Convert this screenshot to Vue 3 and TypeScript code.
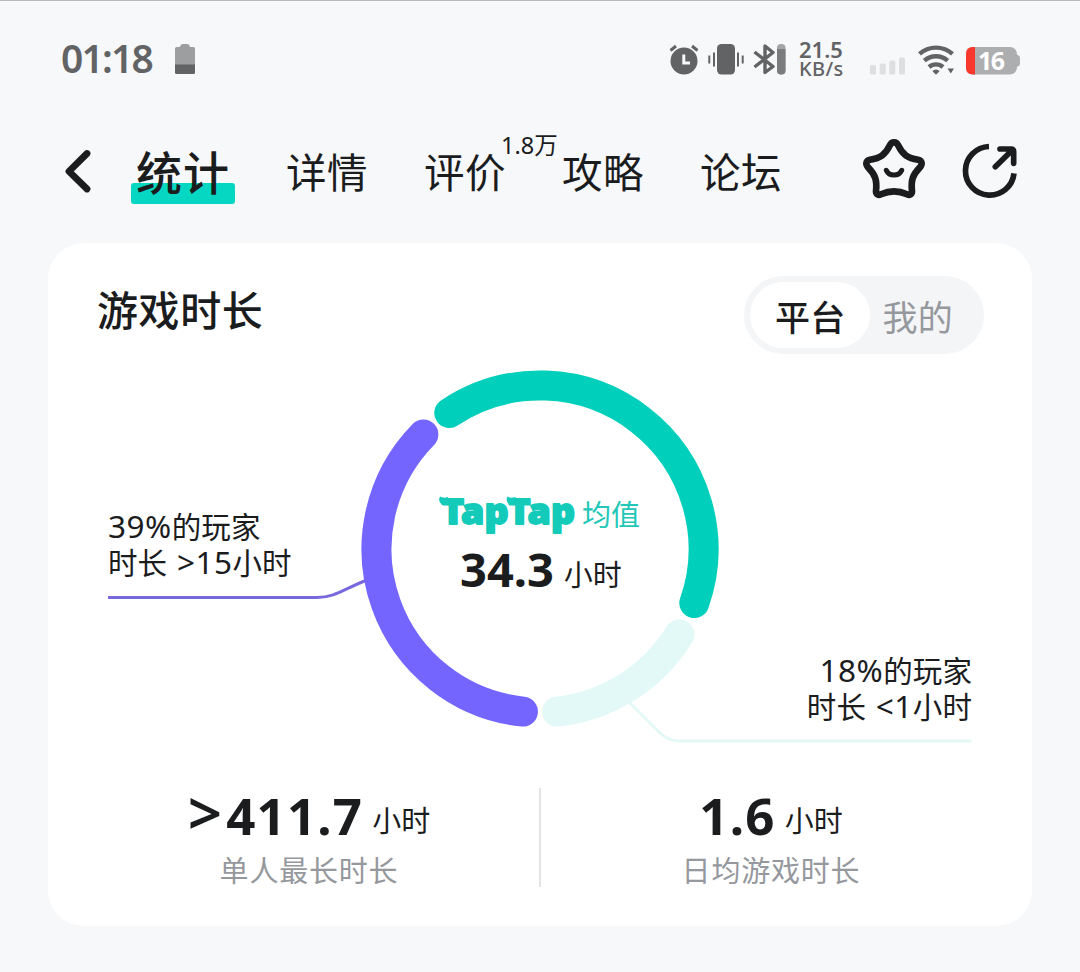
<template>
  <div class="page">
    <header class="status-bar">
      <span class="clock">01:18</span>
      <svg class="low-battery" width="20" height="30" viewBox="0 0 20 30">
        <path d="M0 4.5Q0 3 1.5 3H5Q5.500 0 8 0H12Q14.500 0 15 3H18.500Q20 3 20 4.500V21H0Z" fill="#9d9ea0" />
        <path d="M0 20.500H20V28.500Q20 30 18.500 30H1.500Q0 30 0 28.500Z" fill="#626365" />
      </svg>
      <div class="status-icons">
        <svg class="icon-alarm" width="32" height="34" viewBox="0 0 32 34" fill="none">
          <circle cx="16" cy="18" r="13.500" fill="#626365" />
          <path d="M2.500 7.500L8 3M24 3L29.500 7.500" stroke="#626365" stroke-width="3" />
          <path d="M15.800 11.500V20H22" stroke="#f7f8fa" stroke-width="3" />
        </svg>
        <svg class="icon-vibrate" width="36" height="34" viewBox="0 0 36 34">
          <rect x="9" y="1" width="18" height="30.500" rx="4.500" fill="#626365" />
          <path d="M1.300 12.500V20.500M6 9.500V23.500M30 9.500V23.500M34.700 12.500V20.500" stroke="#626365" stroke-width="2" />
        </svg>
        <svg class="icon-bluetooth" width="34" height="34" viewBox="0 0 34 34" fill="none">
          <path d="M1.500 9L20 23.500L12 29.500V3L20 9.500L1.500 24" stroke="#626365" stroke-width="3.400" stroke-linejoin="round" />
          <rect x="24" y="1" width="8.500" height="30.500" rx="4" fill="#a3a4a6" />
          <path d="M24 6H32.500V27.500Q32.500 31.500 28.250 31.500Q24 31.500 24 27.500Z" fill="#7b7c7e" />
        </svg>
        <div class="speed">
          <span class="speed-value">21.5</span>
          <span class="speed-unit">KB/s</span>
        </div>
        <svg class="icon-signal" width="36" height="34" viewBox="0 0 36 34" fill="#dedfe1">
          <rect x="0" y="22" width="6" height="9.500" rx="1.500" />
          <rect x="9.700" y="20.500" width="6" height="11" rx="1.500" />
          <rect x="19.300" y="17.500" width="6" height="14" rx="1.500" />
          <rect x="29" y="14.500" width="6" height="17" rx="1.500" />
        </svg>
        <svg class="icon-wifi" width="38" height="34" viewBox="0 0 38 34" fill="none">
          <g stroke="#626365" stroke-width="4.400">
            <path d="M1.500 10.800A25 25 0 0 1 34.500 10.800" />
            <path d="M6.300 17.600A18 18 0 0 1 29.700 17.600" />
            <path d="M11 24A10.500 10.500 0 0 1 25 24" />
          </g>
          <path d="M14.300 28Q18 25 21.700 28L18 31.800Z" fill="#626365" />
          <path d="M29.500 25.500H36L32.750 30.500Z" fill="#626365" />
        </svg>
        <svg class="icon-battery" width="54" height="34" viewBox="0 0 54 34">
          <path d="M50 11.500Q54 12 54 15V20.500Q54 23.500 50 24Z" fill="#adaeb0" />
          <rect x="0" y="4" width="51" height="27.500" rx="7" fill="#adaeb0" />
          <path d="M9 4V31.500H7Q0 31.500 0 24.500V11Q0 4 7 4Z" fill="#f8382c" />
          <text x="12" y="26.500" class="battery-text" textLength="27">16</text>
        </svg>
      </div>
    </header>

    <nav class="nav">
      <svg class="back" width="28" height="46" viewBox="0 0 28 46" fill="none">
        <path d="M23 5.500L5 23.300L23 41" stroke="#1b1c1e" stroke-width="6.800" stroke-linecap="round" stroke-linejoin="round" />
      </svg>
      <div class="tabs">
        <div
          v-for="tab in tabs"
          :key="tab.name"
          class="tab"
          :class="{ active: currentTab === tab.name }"
          @click="currentTab = tab.name"
        >
          <span class="tab-name">{{ tab.name }}</span>
          <span v-if="tab.count" class="tab-count">{{ tab.count }}</span>
        </div>
      </div>
      <svg class="star" width="64" height="62" viewBox="66 54 192 186" fill="none" stroke="#1b1c1e" stroke-linecap="round" stroke-linejoin="round">
        <path d="M149 77C155 64 169 64 175 77C188 104 203 114 234 119C247 122 248 133 239 143C219 164 212 180 216 214C216 223 209 227 201 223C175 211 149 211 123 223C115 227 108 223 108 214C112 180 105 164 85 143C76 133 77 122 90 119C121 114 136 104 149 77Z" stroke-width="20" />
        <path d="M139 151C148 170 176 170 185 151" stroke-width="15" />
      </svg>
      <svg class="share" width="60" height="58" viewBox="360 66 180 174" fill="none" stroke="#1b1c1e" stroke-width="17">
        <path d="M447 79.500A73 73 0 1 0 522 160" />
        <path d="M466 140L517 90M480 87H513Q521 87 521 95V130" stroke-linecap="round" />
      </svg>
    </nav>

    <section class="card">
      <div class="card-header">
        <h2 class="card-title">游戏时长</h2>
        <div class="switch">
          <span
            v-for="s in scopes"
            :key="s"
            class="switch-item"
            :class="{ on: scope === s }"
            @click="scope = s"
          >{{ s }}</span>
        </div>
      </div>

      <div class="chart">
        <svg class="ring" width="984" height="390" viewBox="0 0 984 390" fill="none">
          <path d="M60 231.500H269C287 231.500 296 223 320 213.500" stroke="#7768dc" stroke-width="3" />
          <path d="M580 335L611 366Q620 375 631 375H923.500" stroke="#e4f8f5" stroke-width="3" />
          <path
            v-for="arc in arcs"
            :key="arc.color"
            :d="arcPath(arc.from, arc.to)"
            :stroke="arc.color"
            stroke-width="30"
            stroke-linecap="round"
          />
        </svg>
        <div class="callout callout-left">
          <div><span class="num">39%</span>的玩家</div>
          <div>时长<span class="num sign"> &gt;</span><span class="num">15</span>小时</div>
        </div>
        <div class="average">
          <div class="brand">
            <svg class="brand-logo" width="140" height="46" viewBox="0 0 140 46">
              <text x="4" y="32" class="brand-text" textLength="133" lengthAdjust="spacingAndGlyphs">TapTap</text>
              <path d="M4 13Q-0.500 9 2 4.500Q5 6.500 10 5L12 12ZM71.500 13Q67 9 69.500 4.500Q72.500 6.500 77.500 5L79.500 12Z" fill="#14cbb9" />
            </svg>
            <span class="brand-label">均值</span>
          </div>
          <div class="average-value"><b>34.3</b><span class="unit">小时</span></div>
        </div>
        <div class="callout callout-right">
          <div><span class="num">18%</span>的玩家</div>
          <div>时长<span class="num sign"> &lt;</span><span class="num">1</span>小时</div>
        </div>
      </div>

      <div class="stats">
        <div v-for="item in stats" :key="item.label" class="stat">
          <div class="stat-value">
            <span v-if="item.prefix" class="prefix">{{ item.prefix }}</span><b>{{ item.value }}</b><span class="unit">小时</span>
          </div>
          <div class="stat-label">{{ item.label }}</div>
        </div>
      </div>
    </section>
  </div>
</template>

<script lang="ts" setup>
import { ref } from 'vue';

interface Tab {
  name: string;
  count?: string;
}

interface Arc {
  from: number;
  to: number;
  color: string;
}

interface Stat {
  prefix?: string;
  value: string;
  label: string;
}

const tabs: Tab[] = [
  { name: '统计' },
  { name: '详情' },
  { name: '评价', count: '1.8万' },
  { name: '攻略' },
  { name: '论坛' },
];
const currentTab = ref('统计');

const scopes = ['平台', '我的'];
const scope = ref('平台');

// angles in degrees, clockwise from 12 o'clock
const arcs: Arc[] = [
  { from: 121.5, to: 174, color: '#e3f9f7' },
  { from: 186, to: 314.5, color: '#7465ff' },
  { from: -33.7, to: 109.3, color: '#00cfbc' },
];

const stats: Stat[] = [
  { prefix: '>', value: '411.7', label: '单人最长时长' },
  { value: '1.6', label: '日均游戏时长' },
];

function point(deg: number) {
  const rad = (deg * Math.PI) / 180;
  return `${(492 + 163.5 * Math.sin(rad)).toFixed(2)} ${(183 - 163.5 * Math.cos(rad)).toFixed(2)}`;
}

function arcPath(from: number, to: number) {
  return `M${point(from)}A163.5 163.5 0 0 1 ${point(to)}`;
}
</script>

<style>
body {
  margin: 0;
  background: #f7f8fa;
}
</style>

<style scoped>
.page {
  box-sizing: border-box;
  width: 1080px;
  height: 972px;
  overflow: hidden;
  border-top: 1px solid #b9babc;
  background: #f7f8fa;
  color: #1b1c1e;
  font-family: "Noto Sans", "Noto Sans CJK SC", sans-serif;
}
svg {
  display: block;
  flex: none;
}
.status-bar {
  display: flex;
  align-items: center;
  height: 117px;
  padding: 0 60px 0 61px;
}
.clock {
  width: 114px;
  margin-top: -3px;
  font-size: 39px;
  font-weight: 600;
  line-height: 40px;
  letter-spacing: -1.8px;
  color: #626365;
}
.low-battery {
  margin-top: -2px;
}
.status-icons {
  display: flex;
  align-items: center;
  margin-left: auto;
}
.icon-vibrate {
  margin-left: 8px;
}
.icon-bluetooth {
  margin-left: 9px;
}
.speed {
  display: flex;
  flex-direction: column;
  width: 58px;
  margin-left: 12px;
  margin-top: -2px;
  color: #626365;
  white-space: nowrap;
}
.speed-value {
  font-size: 22px;
  font-weight: 600;
  line-height: 19px;
}
.speed-unit {
  font-size: 20px;
  font-weight: 500;
  line-height: 19px;
  letter-spacing: 0.4px;
}
.icon-signal {
  margin-left: 13px;
}
.icon-wifi {
  margin-left: 12px;
}
.icon-battery {
  margin-left: 10px;
}
.battery-text {
  font-size: 25px;
  font-weight: 700;
  fill: #fff;
}
.nav {
  display: flex;
  align-items: center;
  height: 106px;
  padding: 0 60px 0 64px;
}
.tabs {
  display: flex;
  align-items: center;
  gap: 56px;
  margin-left: 44px;
}
.tab {
  position: relative;
  padding-top: 4px;
  font-size: 40.5px;
  line-height: 60px;
  letter-spacing: 0.5px;
  white-space: nowrap;
  cursor: pointer;
}
.tab.active {
  font-size: 46px;
  font-weight: 500;
  letter-spacing: 1px;
}
.tab.active .tab-name {
  top: -1px;
}
.tab.active::before {
  content: "";
  position: absolute;
  left: -5px;
  top: 44px;
  width: 104px;
  height: 21px;
  border-radius: 3px;
  background: #06d7c3;
}
.tab-name {
  position: relative;
}
.tab-count {
  position: absolute;
  left: 77px;
  top: -9px;
  font-size: 23.5px;
  line-height: 30px;
  letter-spacing: 0;
}
.star {
  margin-left: auto;
  margin-top: -4px;
}
.share {
  margin-left: 34px;
}
.card {
  box-sizing: border-box;
  width: 984px;
  height: 683px;
  margin: 19px auto 0;
  padding-top: 33px;
  border-radius: 36px;
  background: #fff;
}
.card-header {
  display: flex;
  justify-content: space-between;
  padding: 0 48px 0 49px;
}
.card-title {
  margin: 0;
  font-size: 41px;
  font-weight: 500;
  line-height: 68px;
  letter-spacing: 0.6px;
}
.switch {
  display: flex;
  box-sizing: border-box;
  width: 240px;
  height: 78px;
  padding: 6px;
  border-radius: 39px;
  background: #f4f5f7;
}
.switch-item {
  width: 96px;
  padding-left: 13px;
  border-radius: 33px;
  font-size: 35px;
  line-height: 71px;
  letter-spacing: 0.3px;
  color: #95989d;
  cursor: pointer;
}
.switch-item.on {
  width: 95px;
  height: 66px;
  padding-left: 25px;
  background: #fff;
  color: #1b1c1e;
  font-weight: 500;
}
.chart {
  position: relative;
  display: flex;
  justify-content: space-between;
  height: 390px;
  margin-top: 12px;
  padding: 0 60px;
}
.ring {
  position: absolute;
  left: 0;
  top: 0;
}
.callout {
  position: relative;
  width: 190px;
  font-size: 29.5px;
  line-height: 35.5px;
  letter-spacing: 0.1px;
  white-space: nowrap;
}
.callout .num {
  font-size: 31.5px;
  line-height: 30px;
  letter-spacing: 0.5px;
  white-space: pre;
}
.callout .sign {
  margin-left: 1px;
}
.callout-left {
  padding-top: 143px;
}
.callout-right {
  padding-top: 287px;
  text-align: right;
}
.average {
  position: relative;
  padding-top: 126px;
  width: 204px;
}
.brand {
  display: flex;
  align-items: center;
  height: 46px;
  white-space: nowrap;
}
.brand-logo {
  overflow: visible;
}
.brand-text {
  font-size: 36px;
  font-weight: 900;
  fill: #14cbb9;
  stroke: #14cbb9;
  stroke-width: 1.8px;
  stroke-linejoin: round;
}
.brand-label {
  margin-left: 4px;
  font-size: 29px;
  line-height: 46px;
  color: #22c7b7;
}
.average-value {
  padding-left: 22px;
  font-size: 47px;
  line-height: 63px;
  white-space: nowrap;
}
.unit {
  position: relative;
  top: -1px;
  margin-left: 10px;
  font-size: 29px;
  line-height: 30px;
}
.stats {
  display: flex;
  height: 99px;
  margin-top: 32px;
  padding: 0 30px;
}
.stat {
  position: relative;
  width: 462px;
  text-align: center;
}
.stat + .stat::before {
  content: "";
  position: absolute;
  left: -1px;
  top: 0;
  width: 2px;
  height: 99px;
  background: #e3e4e6;
}
.stat-value {
  height: 58px;
  font-size: 51px;
  line-height: 55px;
  white-space: nowrap;
}
.stat-value b {
  letter-spacing: 1.2px;
}
.stat-value .unit {
  top: -3px;
  margin-left: 9px;
}
.stat-value .prefix {
  margin-right: 4px;
  font-size: 60px;
  font-weight: 600;
  line-height: 30px;
}
.stat-label {
  font-size: 29px;
  line-height: 49px;
  letter-spacing: 0.8px;
  color: #95989d;
}
</style>
